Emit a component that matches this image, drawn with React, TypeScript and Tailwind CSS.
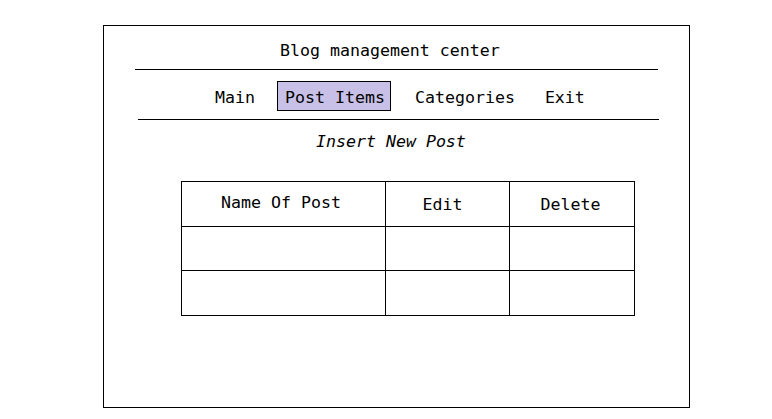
import React from "react";

const App: React.FC = () => {
    return (
        <div className="w-[772px] h-[419px] bg-white text-black font-['DejaVu_Sans_Mono',monospace] text-[16.6px] overflow-hidden">
            <div className="ml-[103px] mt-[25px] w-[587px] h-[383px] border border-black">
                <div className="pt-[14px] pl-[176px] leading-[22px]">Blog management center</div>
                <div className="ml-[31px] mt-[7px] w-[523px] h-px bg-black" />

                <div className="flex items-center pl-[111px] mt-[11px] h-[30px]">
                    <span className="pt-[4px] leading-[22px]">Main</span>
                    <span className="ml-[22px] h-[30px] w-[114px] flex items-center pl-[7px] pt-[4px] bg-[#c8c0e6] border border-black leading-[22px]">
                        Post Items
                    </span>
                    <span className="ml-[24px] pt-[4px] leading-[22px]">Categories</span>
                    <span className="ml-[30px] pt-[4px] leading-[22px]">Exit</span>
                </div>

                <div className="ml-[34px] mt-[8px] w-[521px] h-px bg-black" />
                <div className="mt-[11px] pl-[212px] italic leading-[22px]">Insert New Post</div>

                <table className="ml-[77px] mt-[28px] border-collapse">
                    <tbody>
                        <tr className="h-[45px]">
                            <td className="w-[204px] border border-black text-center pt-[2px] pb-[3px] pr-[5px]">Name Of Post</td>
                            <td className="w-[124px] border border-black text-center pt-[2px] pr-[10px]">Edit</td>
                            <td className="w-[125px] border border-black text-center pt-[2px] pr-[3px]">Delete</td>
                        </tr>
                        <tr className="h-[44px]">
                            <td className="border border-black" />
                            <td className="border border-black" />
                            <td className="border border-black" />
                        </tr>
                        <tr className="h-[45px]">
                            <td className="border border-black" />
                            <td className="border border-black" />
                            <td className="border border-black" />
                        </tr>
                    </tbody>
                </table>
            </div>
        </div>
    );
};

export default App;
